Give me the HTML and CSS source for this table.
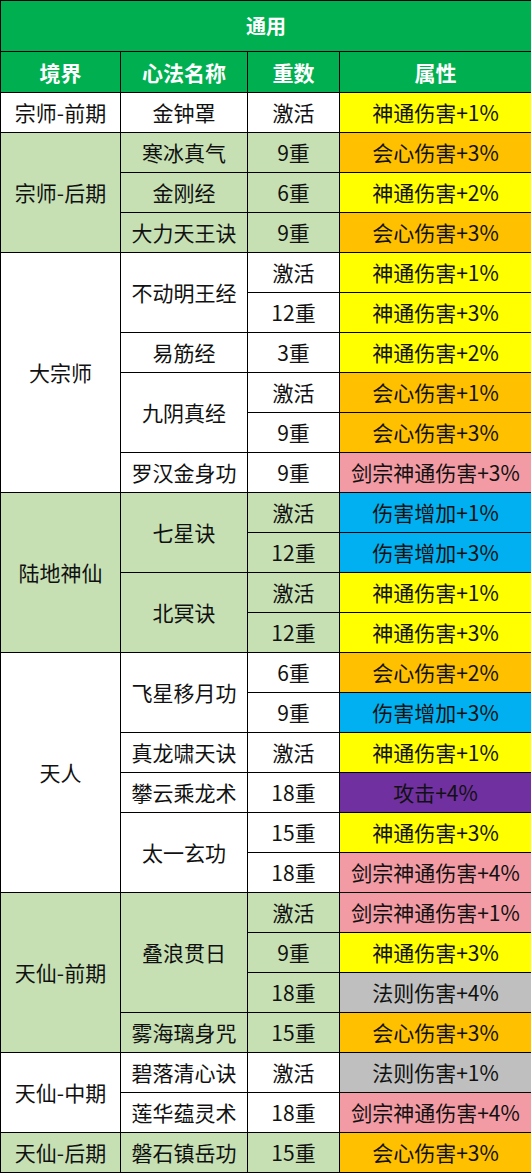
FILE: index.html
```html
<!DOCTYPE html>
<html lang="zh-CN">
<head>
    <meta charset="UTF-8">
    <title>通用心法</title>
    <link rel="stylesheet" href="styles.css">
</head>
<body>
    <table class="skill-table">
        <colgroup>
            <col class="col-realm">
            <col class="col-name">
            <col class="col-level">
            <col class="col-attr">
        </colgroup>
        <thead>
            <tr class="title-row"><th colspan="4">通用</th></tr>
            <tr class="head-row"><th>境界</th><th>心法名称</th><th>重数</th><th>属性</th></tr>
        </thead>
        <tbody>
            <!-- 宗师-前期 -->
            <tr><td>宗师-前期</td><td>金钟罩</td><td>激活</td><td class="yellow">神通伤害+1%</td></tr>

            <!-- 宗师-后期 -->
            <tr class="green"><td rowspan="3">宗师-后期</td><td>寒冰真气</td><td>9重</td><td class="orange">会心伤害+3%</td></tr>
            <tr class="green"><td>金刚经</td><td>6重</td><td class="yellow">神通伤害+2%</td></tr>
            <tr class="green"><td>大力天王诀</td><td>9重</td><td class="orange">会心伤害+3%</td></tr>

            <!-- 大宗师 -->
            <tr><td rowspan="6">大宗师</td><td rowspan="2">不动明王经</td><td>激活</td><td class="yellow">神通伤害+1%</td></tr>
            <tr><td>12重</td><td class="yellow">神通伤害+3%</td></tr>
            <tr><td>易筋经</td><td>3重</td><td class="yellow">神通伤害+2%</td></tr>
            <tr><td rowspan="2">九阴真经</td><td>激活</td><td class="orange">会心伤害+1%</td></tr>
            <tr><td>9重</td><td class="orange">会心伤害+3%</td></tr>
            <tr><td>罗汉金身功</td><td>9重</td><td class="pink">剑宗神通伤害+3%</td></tr>

            <!-- 陆地神仙 -->
            <tr class="green"><td rowspan="4">陆地神仙</td><td rowspan="2">七星诀</td><td>激活</td><td class="blue">伤害增加+1%</td></tr>
            <tr class="green"><td>12重</td><td class="blue">伤害增加+3%</td></tr>
            <tr class="green"><td rowspan="2">北冥诀</td><td>激活</td><td class="yellow">神通伤害+1%</td></tr>
            <tr class="green"><td>12重</td><td class="yellow">神通伤害+3%</td></tr>

            <!-- 天人 -->
            <tr><td rowspan="6">天人</td><td rowspan="2">飞星移月功</td><td>6重</td><td class="orange">会心伤害+2%</td></tr>
            <tr><td>9重</td><td class="blue">伤害增加+3%</td></tr>
            <tr><td>真龙啸天诀</td><td>激活</td><td class="yellow">神通伤害+1%</td></tr>
            <tr><td>攀云乘龙术</td><td>18重</td><td class="purple">攻击+4%</td></tr>
            <tr><td rowspan="2">太一玄功</td><td>15重</td><td class="yellow">神通伤害+3%</td></tr>
            <tr><td>18重</td><td class="pink">剑宗神通伤害+4%</td></tr>

            <!-- 天仙-前期 -->
            <tr class="green"><td rowspan="4">天仙-前期</td><td rowspan="3">叠浪贯日</td><td>激活</td><td class="pink">剑宗神通伤害+1%</td></tr>
            <tr class="green"><td>9重</td><td class="yellow">神通伤害+3%</td></tr>
            <tr class="green"><td>18重</td><td class="grey">法则伤害+4%</td></tr>
            <tr class="green"><td>雾海璃身咒</td><td>15重</td><td class="orange">会心伤害+3%</td></tr>

            <!-- 天仙-中期 -->
            <tr><td rowspan="2">天仙-中期</td><td>碧落清心诀</td><td>激活</td><td class="grey">法则伤害+1%</td></tr>
            <tr><td>莲华蕴灵术</td><td>18重</td><td class="pink">剑宗神通伤害+4%</td></tr>

            <!-- 天仙-后期 -->
            <tr class="green"><td>天仙-后期</td><td>磐石镇岳功</td><td>15重</td><td class="orange">会心伤害+3%</td></tr>
        </tbody>
    </table>
</body>
</html>
```

FILE: styles.css
```css
body {
    margin: 0;
    background-color: white;
    font-family: "Noto Sans CJK SC", "Noto Sans", sans-serif;
}
.skill-table {
    width: 531px;
    border-collapse: collapse;
    table-layout: fixed;
    color: #111;
    font-size: 21px;
}
.col-realm { width: 120px; }
.col-name { width: 127px; }
.col-level { width: 92px; }
.col-attr { width: 192px; }

.skill-table th,
.skill-table td {
    border: 1px solid #000;
    padding: 0;
    text-align: center;
    vertical-align: middle;
    line-height: 1;
}
.skill-table td {
    height: 39px;
    white-space: nowrap;
}
.title-row th,
.head-row th {
    background-color: #00B050; /* Excel green */
    color: white;
    font-weight: bold;
}
.title-row th {
    height: 50px;
    font-size: 20px;
}
.head-row th {
    height: 40px;
    font-size: 21px;
}
.green td {
    background-color: #C6E0B4;
}
.skill-table td.yellow { background-color: #FFFF00; }
.skill-table td.orange { background-color: #FFC000; }
.skill-table td.blue { background-color: #00B0F0; }
.skill-table td.purple { background-color: #7030A0; }
.skill-table td.pink { background-color: #F29BA4; }
.skill-table td.grey { background-color: #BFBFBF; }
```
